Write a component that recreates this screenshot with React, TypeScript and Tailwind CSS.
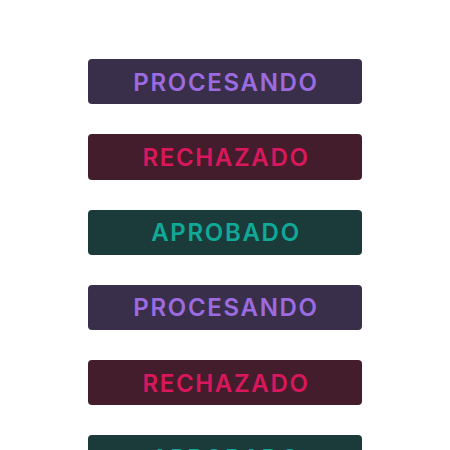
type Status = "procesando" | "rechazado" | "aprobado";

const styles: Record<Status, { label: string; box: string }> = {
  procesando: { label: "PROCESANDO", box: "bg-[#3a2f4a] text-[#9c6be0]" },
  rechazado: { label: "RECHAZADO", box: "bg-[#441d2c] text-[#d8175c]" },
  aprobado: { label: "APROBADO", box: "bg-[#1a3b3a] text-[#10a897]" },
};

const items: Status[] = ["procesando", "rechazado", "aprobado", "procesando", "rechazado", "aprobado"];

function StatusBadge({ status }: { status: Status }) {
  const s = styles[status];
  return (
    <div
      className={`flex h-[45.25px] w-[274px] shrink-0 items-center justify-center rounded-[4px] pl-[2px] pt-[2px] text-[24px] font-semibold tracking-[0.07em] ${s.box}`}
      style={{ fontFamily: "Inter, 'DejaVu Sans', sans-serif" }}
    >
      {s.label}
    </div>
  );
}

export default function App() {
  return (
    <div className="flex min-h-[450px] flex-col gap-[30px] bg-white pl-[88px] pt-[59px]">
      {items.map((st, i) => (
        <StatusBadge key={i} status={st} />
      ))}
    </div>
  );
}
